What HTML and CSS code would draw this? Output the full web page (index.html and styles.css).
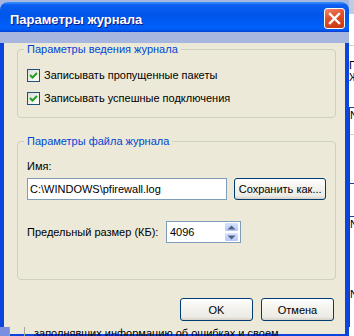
FILE: index.html
```html
<!DOCTYPE html>
<html lang="ru">
<head>
  <meta charset="UTF-8">
  <title>Параметры журнала</title>
  <link rel="stylesheet" href="styles.css">
</head>
<body>

<div class="screen">
  <div class="top-row">
    <div class="window">
      <div class="titlebar">
        <span class="title">Параметры журнала</span>
        <span class="close">
          <svg width="13" height="13" viewBox="0 0 13 13">
            <path d="M2 2 L11 11 M11 2 L2 11" stroke="#fff" stroke-width="2.4" stroke-linecap="square"/>
          </svg>
        </span>
      </div>

      <div class="dialog">
        <fieldset class="group group-log">
          <legend>Параметры ведения журнала</legend>
          <div class="check">
            <span class="box">
              <svg width="11" height="11" viewBox="0 0 11 11">
                <polyline points="2,5 4.5,7.5 9,3" fill="none" stroke="#21a121" stroke-width="2"/>
              </svg>
            </span>
            Записывать пропущенные пакеты
          </div>
          <div class="check">
            <span class="box">
              <svg width="11" height="11" viewBox="0 0 11 11">
                <polyline points="2,5 4.5,7.5 9,3" fill="none" stroke="#21a121" stroke-width="2"/>
              </svg>
            </span>
            Записывать успешные подключения
          </div>
        </fieldset>

        <fieldset class="group group-file">
          <legend>Параметры файла журнала</legend>
          <div class="field-label">Имя:</div>
          <div class="file-row">
            <div class="textbox">C:\WINDOWS\pfirewall.log</div>
            <div class="btn btn-save">Сохранить как...</div>
          </div>
          <div class="size-row">
            <span class="size-label">Предельный размер (КБ):</span>
            <div class="spin">
              <span class="spin-value">4096</span>
              <span class="spin-btns">
                <span class="spin-btn">
                  <svg width="9" height="5" viewBox="0 0 9 5"><polygon points="0.5,4.5 4.5,0.5 8.5,4.5" fill="#4d6185"/></svg>
                </span>
                <span class="spin-btn">
                  <svg width="9" height="5" viewBox="0 0 9 5"><polygon points="0.5,0.5 4.5,4.5 8.5,0.5" fill="#4d6185"/></svg>
                </span>
              </span>
            </div>
          </div>
        </fieldset>

        <div class="actions">
          <div class="btn">OK</div>
          <div class="btn">Отмена</div>
        </div>
      </div>
    </div>

    <!-- краешек окна позади диалога -->
    <div class="side">
      <div class="side-top"></div>
      <div class="side-line"></div>
      <div class="side-text side-first">Пр</div>
      <div class="side-text">Жу</div>
      <div class="side-cell">
        <div class="side-rule"></div>
        <div class="side-text">Nм</div>
        <div class="side-gray"></div>
        <div class="side-rule side-mid"></div>
        <div class="side-rule side-low"></div>
        <div class="side-text">Nм</div>
        <div class="side-text side-last">Nм</div>
      </div>
    </div>
  </div>

  <div class="under">
    <span class="under-frame"></span>
    <span class="under-col"></span>
    <span class="under-text">заполнявших информацию об ошибках и своем</span>
  </div>
</div>

</body>
</html>
```

FILE: styles.css
```css
* {
  box-sizing: border-box;
}
body {
  margin: 0;
  background: #fff;
  font-family: "Liberation Sans", Arial, sans-serif;
  font-size: 11px;
  color: #000;
}
.screen {
  width: 354px;
  height: 336px;
  overflow: hidden;
}
.top-row {
  display: flex;
  height: 327px;
  background: #a7b6df;
}
.window {
  width: 349px;
  margin-top: 2px;
  flex-shrink: 0;
}
/* Заголовок */
.titlebar {
  display: flex;
  align-items: center;
  height: 30px;
  padding: 0 4px 0 10px;
  border-radius: 8px 8px 0 0;
  background: linear-gradient(180deg, #3d95ff, #0a5ff0 10%, #0055ea 45%, #0060fb 85%, #0058ee 93%, #0040d8);
}
.title {
  padding-top: 5px;
  color: #fff;
  font-size: 13px;
  font-weight: bold;
  text-shadow: 1px 1px #0a1883;
}
.close {
  display: flex;
  align-items: center;
  justify-content: center;
  align-self: flex-start;
  margin: 6px 0 0 auto;
  width: 21px;
  height: 21px;
  border: 1px solid #fff;
  border-radius: 3px;
  background: linear-gradient(160deg, #f08a6c, #e0502c 40%, #c8360e);
}
/* Тело диалога */
.dialog {
  height: 295px;
  padding: 0 9px 2px 13px;
  background: #ece9d8;
  border: 4px solid #0b45dd;
  border-top: 0;
}
.group {
  margin: 0;
  min-width: 0;
  border: 1px solid #d0d0bf;
  border-radius: 4px;
}
.group legend {
  margin-left: -3px;
  padding: 0 3px;
  line-height: 13px;
  color: #0046d5;
}
.group-log {
  margin-top: 11px;
  padding: 13px 9px 12px;
}
.group-file {
  margin-top: 17px;
  padding: 12px 9px 36px;
}
.check {
  display: flex;
  align-items: center;
  gap: 4px;
  height: 13px;
  line-height: 13px;
}
.check + .check {
  margin-top: 10px;
}
.box {
  display: flex;
  align-items: center;
  justify-content: center;
  width: 13px;
  height: 13px;
  border: 1px solid #1c5180;
  background: linear-gradient(135deg, #dcdcd7, #fff);
}
.field-label {
  line-height: 13px;
}
.file-row {
  display: flex;
  gap: 7px;
  margin-top: 5px;
}
.textbox {
  width: 203px;
  height: 22px;
  padding: 0 2px;
  line-height: 20px;
  border: 1px solid #7f9db9;
  background: #fff;
}
.btn {
  display: flex;
  align-items: center;
  justify-content: center;
  width: 73px;
  height: 23px;
  border: 1px solid #003c74;
  border-radius: 3px;
  background: linear-gradient(180deg, #fff, #f4f3ee 40%, #ecebe6 85%, #d6d0c5);
}
.btn-save {
  width: 93px;
  height: 22px;
}
.size-row {
  display: flex;
  align-items: center;
  margin-top: 21px;
}
.size-label {
  width: 139px;
}
.spin {
  display: flex;
  justify-content: space-between;
  width: 75px;
  height: 22px;
  border: 1px solid #7f9db9;
  background: #fff;
}
.spin-value {
  padding-left: 3px;
  line-height: 20px;
}
.spin-btns {
  display: flex;
  flex-direction: column;
  width: 15px;
  margin: 0 1px 0 0;
}
.spin-btn {
  display: flex;
  align-items: center;
  justify-content: center;
  height: 10px;
  border: 1px solid #fff;
  border-radius: 2px;
  background: linear-gradient(180deg, #d6e2fd, #b4c8f6);
}
.actions {
  display: flex;
  justify-content: flex-end;
  gap: 8px;
  margin-top: 18px;
  padding-right: 2px;
}
/* Фон позади окна */
.side {
  flex: 1;
  display: flex;
  flex-direction: column;
  overflow: hidden;
  background: #fff;
  white-space: nowrap;
}
.side-top {
  height: 14px;
  background: #c3cbe0;
}
.side-line {
  height: 1px;
  margin-top: 31px;
  background: #d4d0c8;
}
.side-text {
  line-height: 10px;
  margin-top: 2px;
}
.side-first {
  margin-top: 14px;
}
.side-cell {
  flex: 1;
  margin-top: 25px;
  border-left: 1px solid #1c3e9d;
}
.side-rule {
  height: 1px;
  background: #1c3e9d;
}
.side-gray {
  height: 1px;
  margin-top: 14px;
  background: #d4d0c8;
}
.side-mid {
  margin-top: 48px;
}
.side-low {
  margin-top: 32px;
}
.side-last {
  margin-top: 60px;
}
.under {
  display: flex;
  height: 9px;
  overflow: hidden;
}
.under-frame {
  width: 10px;
  background: #7b8ee0;
  border-right: 1px solid #a0a0a0;
}
.under-col {
  width: 15px;
  border-right: 1px solid #aca899;
}
.under-text {
  padding-left: 9px;
  line-height: 13px;
  white-space: nowrap;
}
```
